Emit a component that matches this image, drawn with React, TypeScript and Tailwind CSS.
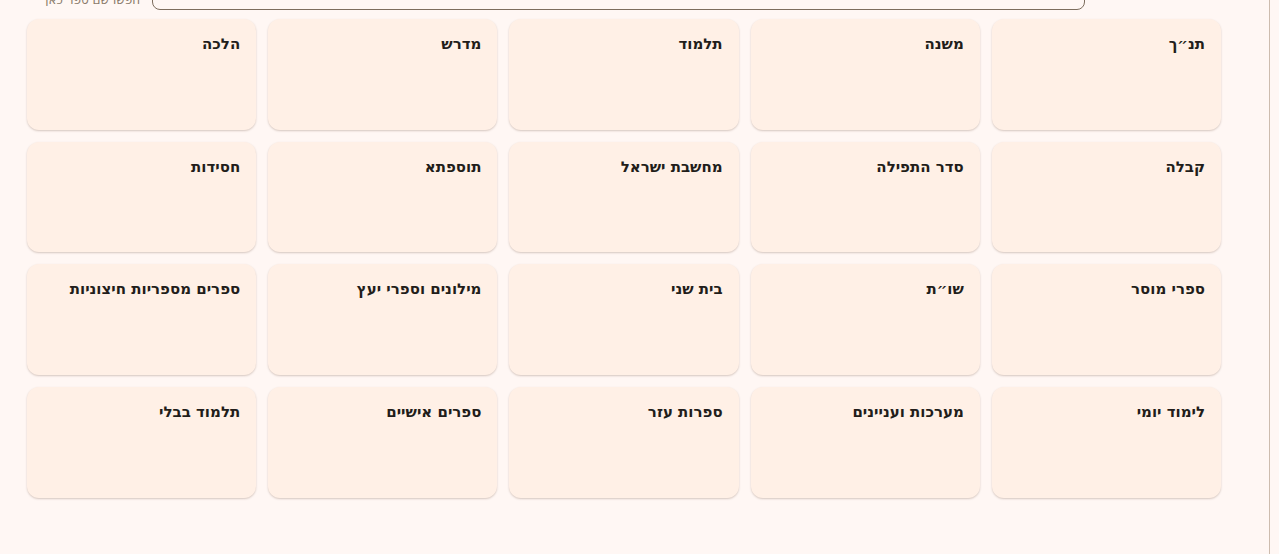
const categories = [
  "תנ״ך",
  "משנה",
  "תלמוד",
  "מדרש",
  "הלכה",
  "קבלה",
  "סדר התפילה",
  "מחשבת ישראל",
  "תוספתא",
  "חסידות",
  "ספרי מוסר",
  "שו״ת",
  "בית שני",
  "מילונים וספרי יעץ",
  "ספרים מספריות חיצוניות",
  "לימוד יומי",
  "מערכות ועניינים",
  "ספרות עזר",
  "ספרים אישיים",
  "תלמוד בבלי",
];

const CategoryCard = ({ title }: { title: string }) => {
  return (
    <div className="h-[110.67px] rounded-xl bg-[#fff0e6] px-4 pt-[13px] shadow-[0_1px_2px_rgba(90,60,40,0.25)]">
      <h3 className="text-[15px] font-bold leading-6 text-[#221d1a]">
        {title}
      </h3>
    </div>
  );
};

export default function App() {
  return (
    <div
      className="flex h-[554px] w-[1279px] overflow-hidden bg-[#fff7f4]"
      style={{ fontFamily: '"DejaVu Sans", sans-serif' }}
    >
      <main
        dir="rtl"
        className="flex h-[554px] w-[1270px] shrink-0 flex-col border-r border-[#cdbcae]"
      >
        {/* search header, scrolled mostly out of view */}
        <div className="-mt-[30px] flex items-end gap-3 pr-[184px]">
          <input
            type="text"
            className="h-[40px] w-[933px] rounded-lg border border-[#7d6d5d] bg-[#fff7f4] outline-none"
          />
          <span className="translate-y-[1px] text-[12px] leading-[22px] text-[#8a7a6a]">
            חפשו שם ספר כאן
          </span>
        </div>
        <div className="mr-[48px] mt-[9px] grid w-[1194px] grid-cols-5 gap-x-3 gap-y-3">
          {categories.map((c) => (
            <CategoryCard key={c} title={c} />
          ))}
        </div>
      </main>
    </div>
  );
}
